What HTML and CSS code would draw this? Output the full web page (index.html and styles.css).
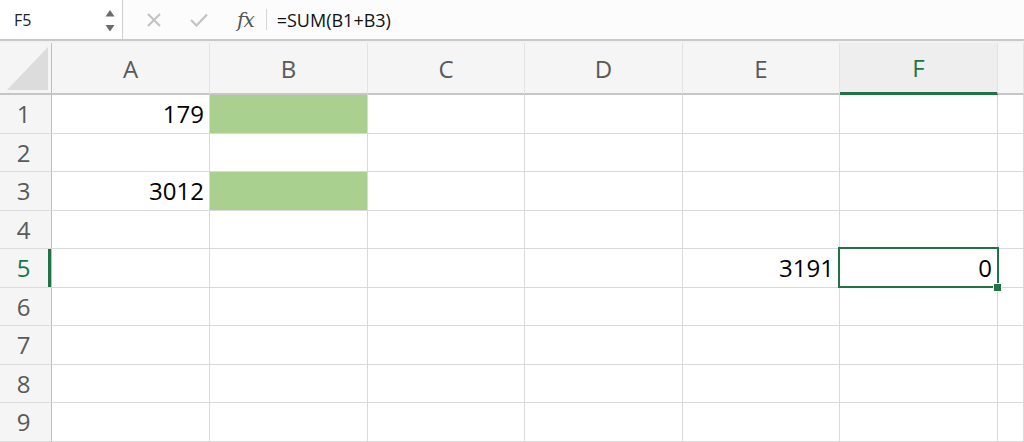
FILE: index.html
```html
<!DOCTYPE html>
<html lang="en">
<head>
    <meta charset="UTF-8">
    <title>Sheet</title>
    <link rel="stylesheet" href="styles.css">
</head>
<body>
    <div class="formula-bar">
        <div class="name-box">
            <span class="name-text">F5</span>
            <span class="spinner">
                <svg width="10" height="24" viewBox="0 0 10 24"><path d="M5 1 L9.5 7.5 L0.5 7.5 Z" fill="#6b6b6b"/><path d="M0.5 16 L9.5 16 L5 22.5 Z" fill="#6b6b6b"/></svg>
            </span>
        </div>
        <div class="bar-icons">
            <svg class="icon-x" width="14" height="14" viewBox="0 0 14 14"><path d="M1 1 L13 13 M13 1 L1 13" stroke="#c3c3c3" stroke-width="2.2" fill="none"/></svg>
            <svg class="icon-ok" width="18" height="14" viewBox="0 0 18 14"><path d="M1 7 L6.5 12.5 L17 1.5" stroke="#c3c3c3" stroke-width="2.2" fill="none"/></svg>
            <span class="fx">fx</span>
        </div>
        <div class="formula">=SUM(B1+B3)</div>
    </div>
    <div class="bar-gap"></div>

    <div class="sheet">
        <div class="corner"><span class="tri"></span></div>
        <div class="col-head">A</div>
        <div class="col-head">B</div>
        <div class="col-head">C</div>
        <div class="col-head">D</div>
        <div class="col-head">E</div>
        <div class="col-head active">F</div>
        <div class="col-head"></div>

        <div class="row-head">1</div>
        <div class="cell num">179</div>
        <div class="cell fill"></div>
        <div class="cell"></div><div class="cell"></div><div class="cell"></div><div class="cell"></div><div class="cell"></div>

        <div class="row-head">2</div>
        <div class="cell"></div><div class="cell"></div><div class="cell"></div><div class="cell"></div><div class="cell"></div><div class="cell"></div><div class="cell"></div>

        <div class="row-head">3</div>
        <div class="cell num">3012</div>
        <div class="cell fill"></div>
        <div class="cell"></div><div class="cell"></div><div class="cell"></div><div class="cell"></div><div class="cell"></div>

        <div class="row-head">4</div>
        <div class="cell"></div><div class="cell"></div><div class="cell"></div><div class="cell"></div><div class="cell"></div><div class="cell"></div><div class="cell"></div>

        <div class="row-head active">5</div>
        <div class="cell"></div><div class="cell"></div><div class="cell"></div><div class="cell"></div>
        <div class="cell num">3191</div>
        <div class="cell num selected">0</div>
        <div class="cell"></div>

        <div class="row-head">6</div>
        <div class="cell"></div><div class="cell"></div><div class="cell"></div><div class="cell"></div><div class="cell"></div><div class="cell"></div><div class="cell"></div>

        <div class="row-head">7</div>
        <div class="cell"></div><div class="cell"></div><div class="cell"></div><div class="cell"></div><div class="cell"></div><div class="cell"></div><div class="cell"></div>

        <div class="row-head">8</div>
        <div class="cell"></div><div class="cell"></div><div class="cell"></div><div class="cell"></div><div class="cell"></div><div class="cell"></div><div class="cell"></div>

        <div class="row-head">9</div>
        <div class="cell"></div><div class="cell"></div><div class="cell"></div><div class="cell"></div><div class="cell"></div><div class="cell"></div><div class="cell"></div>
    </div>
</body>
</html>
```

FILE: styles.css
```css
body {
  margin: 0;
  background: #ffffff;
  font-family: "Open Sans", "Noto Sans", sans-serif;
  overflow: hidden;
}

/* formula bar */
.formula-bar {
  display: flex;
  align-items: center;
  height: 39px;
  background: #fcfcfc;
  border-bottom: 2px solid #c9c9c9;
}
.name-box {
  display: flex;
  align-items: center;
  justify-content: space-between;
  width: 123px;
  height: 39px;
  background: #ffffff;
  border-right: 1px solid #cfcfcf;
  padding: 0 7px 0 14px;
  box-sizing: border-box;
}
.name-text {
  font-size: 16px;
  color: #222;
}
.spinner {
  display: flex;
  padding-top: 2px;
}
.bar-icons {
  display: flex;
  align-items: center;
  height: 21px;
  padding: 0 12px 0 24px;
  border-right: 1px solid #d6d6d6;
}
.icon-x {
  margin-right: 29px;
}
.icon-ok {
  margin-right: 29px;
}
.fx {
  font-family: "DejaVu Serif", "Liberation Serif", serif;
  font-style: italic;
  font-size: 20px;
  color: #555;
  letter-spacing: -1px;
}
.formula {
  padding-left: 10px;
  font-size: 18px;
  color: #111;
}
.bar-gap {
  height: 2px;
  background: #f2f2f2;
}

/* grid */
.sheet {
  display: grid;
  grid-template-columns: 52px 158px 158px 157px 158px 157px 158px 1fr;
  grid-template-rows: 52px repeat(9, 38.5px);
}
.corner {
  position: relative;
  background: #f5f5f5;
  border-right: 1px solid #bfbfbf;
  border-bottom: 2px solid #c6c6c6;
}
.tri {
  position: absolute;
  left: 7px;
  bottom: 3px;
  width: 0;
  height: 0;
  border-left: 41px solid transparent;
  border-bottom: 43px solid #dcdcdc;
}
.col-head {
  display: flex;
  align-items: center;
  justify-content: center;
  background: #f5f5f5;
  border-right: 1px solid #e3e3e3;
  border-bottom: 2px solid #c6c6c6;
  font-size: 24px;
  color: #595959;
}
.col-head.active {
  color: #217346;
  background: #eeeeee;
  border-bottom: 3px solid #217346;
}
.row-head {
  display: flex;
  align-items: center;
  justify-content: center;
  background: #f5f5f5;
  border-right: 1px solid #bfbfbf;
  border-bottom: 1px solid #dcdcdc;
  font-size: 24px;
  color: #595959;
  padding-right: 4px;
}
.row-head.active {
  color: #217346;
  box-shadow: inset -3px 0 0 #217346;
}
.cell {
  border-right: 1px solid #d9d9d9;
  border-bottom: 1px solid #d9d9d9;
  font-size: 24px;
  color: #000;
  display: flex;
  align-items: center;
}
.num {
  justify-content: flex-end;
  padding-right: 5px;
}
.fill {
  background: #a9d08e;
}
.selected {
  position: relative;
}
.selected::after {
  content: "";
  position: absolute;
  top: -2px;
  left: -2px;
  right: -2px;
  bottom: -1px;
  border: 2px solid #217346;
}
.selected::before {
  content: "";
  position: absolute;
  right: -5px;
  bottom: -5px;
  width: 7px;
  height: 7px;
  background: #217346;
  border: 1px solid #fff;
  z-index: 2;
}
```
